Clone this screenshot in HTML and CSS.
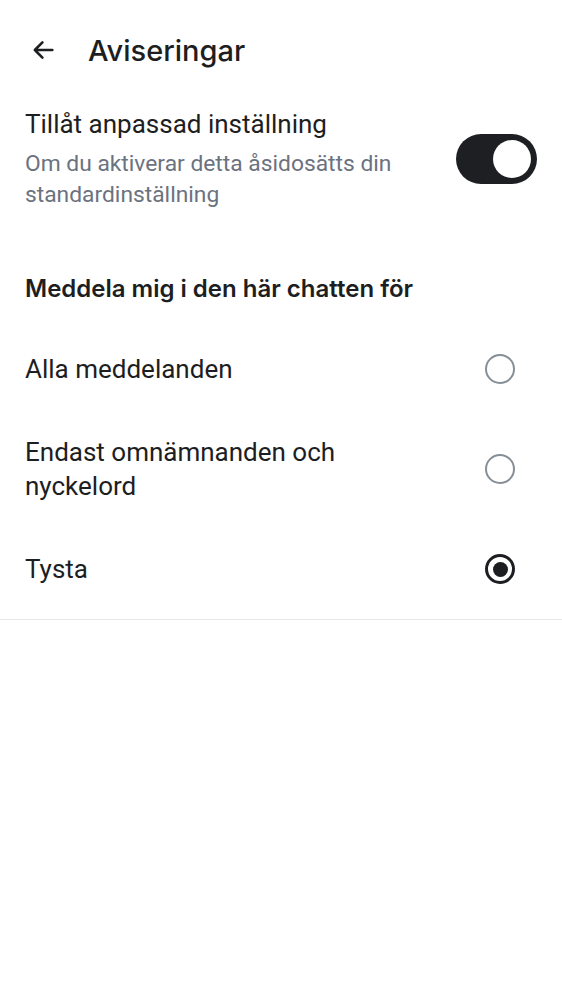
FILE: index.html
```html
<!DOCTYPE html>
<html lang="sv">
<head>
<meta charset="utf-8">
<title>Aviseringar</title>
<link rel="stylesheet" href="styles.css">
</head>
<body>
<header class="topbar">
  <button class="back" aria-label="Tillbaka">
    <svg width="28" height="28" viewBox="0 0 24 24"><path d="M20 12H5M11.5 5.5L5 12l6.5 6.5" fill="none" stroke="#1d1e22" stroke-width="2.2" stroke-linecap="round" stroke-linejoin="round"/></svg>
  </button>
  <h1 class="title">Aviseringar</h1>
</header>
<section class="custom">
  <div class="custom-text">
    <div class="custom-label">Tillåt anpassad inställning</div>
    <div class="custom-desc">Om du aktiverar detta åsidosätts din standardinställning</div>
  </div>
  <div class="toggle"><div class="knob"></div></div>
</section>
<section class="options">
  <h2 class="options-title">Meddela mig i den här chatten för</h2>
  <div class="row"><span class="row-label">Alla meddelanden</span><span class="radio"></span></div>
  <div class="row"><span class="row-label">Endast omnämnanden och nyckelord</span><span class="radio"></span></div>
  <div class="row"><span class="row-label">Tysta</span><span class="radio checked"></span></div>
</section>
</body>
</html>
```
FILE: styles.css
```css
* { box-sizing: border-box; }
body {
  margin: 0;
  background: #fff;
  font-family: Roboto, "Noto Sans", sans-serif;
  color: #1d1e22;
}
.topbar {
  display: flex;
  align-items: center;
  height: 100px;
  padding-left: 28px;
}
.back {
  border: 0;
  background: none;
  padding: 0;
  width: 30px;
  height: 30px;
  display: flex;
  align-items: center;
  justify-content: center;
}
.title {
  margin: 0 0 0 30px;
  font-family: Inter, sans-serif;
  font-weight: 500;
  font-size: 29px;
}
.custom {
  display: flex;
  align-items: center;
  padding: 7px 25px 0 25px;
  gap: 20px;
}
.custom-text { flex: 1; }
.custom-label {
  font-size: 26px;
  line-height: 34px;
}
.custom-desc {
  font-size: 22.8px;
  line-height: 31px;
  color: #6b7280;
  margin-top: 7px;
  max-width: 380px;
}
.toggle {
  width: 81px;
  height: 50px;
  border-radius: 25px;
  background: #1e1f23;
  display: flex;
  align-items: center;
  justify-content: flex-end;
  padding-right: 6px;
  margin-left: auto;
  flex-shrink: 0;
}
.knob {
  width: 38px;
  height: 38px;
  border-radius: 50%;
  background: #fff;
}
.options {
  margin-top: 49px;
  border-bottom: 1px solid #e5e7eb;
}
.options-title {
  margin: 0;
  padding: 0 25px;
  font-family: Inter, sans-serif;
  font-weight: 600;
  font-size: 24px;
  line-height: 60px;
}
.row {
  display: flex;
  align-items: center;
  justify-content: space-between;
  height: 100px;
  padding: 0 47px 0 25px;
}
.row-label {
  font-size: 26px;
  line-height: 34px;
  max-width: 340px;
}
.radio {
  width: 30px;
  height: 30px;
  border-radius: 50%;
  border: 2.5px solid #868e96;
  flex-shrink: 0;
  display: flex;
  align-items: center;
  justify-content: center;
}
.radio.checked {
  border: 3px solid #1d1e22;
}
.radio.checked::after {
  content: "";
  width: 15px;
  height: 15px;
  border-radius: 50%;
  background: #1d1e22;
}
```
